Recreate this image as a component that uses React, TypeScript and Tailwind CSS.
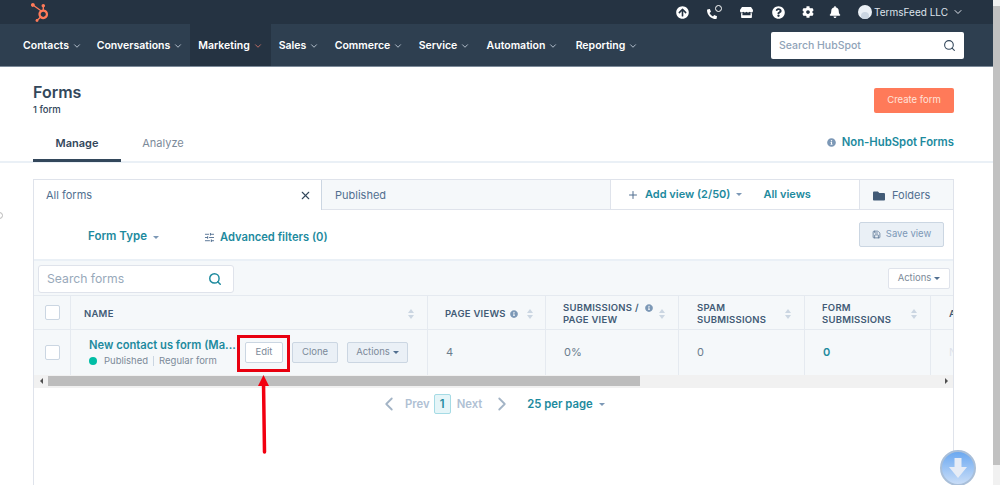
import { ChevronDown, ChevronLeft, ChevronRight, Plus, Save, Search, SlidersHorizontal, X } from "lucide-react";
import { FaArrowCircleUp, FaBell, FaCog, FaFolder, FaHubspot, FaInfoCircle, FaPhone, FaQuestionCircle, FaStore } from "react-icons/fa";

const NAV = [
  { label: "Contacts", cls: "w-[75px]" },
  { label: "Conversations", cls: "w-[100px]" },
  { label: "Marketing", cls: "w-[81px] bg-[#253342]", active: true },
  { label: "Sales", cls: "w-[56px]" },
  { label: "Commerce", cls: "w-[84px]" },
  { label: "Service", cls: "w-[67px]" },
  { label: "Automation", cls: "w-[89px]" },
  { label: "Reporting", cls: "w-[80px]" },
];

function Caret({ className = "" }: { className?: string }) {
  return <span className={`inline-block border-x-[3px] border-t-[3px] border-x-transparent ${className}`} />;
}

function Sort() {
  return (
    <span className="flex flex-col gap-[2px]">
      <span className="border-x-[3px] border-b-[4px] border-x-transparent border-b-[#cbd6e2]" />
      <span className="border-x-[3px] border-t-[4px] border-x-transparent border-t-[#cbd6e2]" />
    </span>
  );
}

function Info({ className = "" }: { className?: string }) {
  return <FaInfoCircle className={`text-[#7c98b6] ${className}`} />;
}

export default function App() {
  return (
    <div className="relative flex h-[485px] w-[1000px] overflow-hidden bg-white font-['Inter',sans-serif] text-[#33475b]">
      <div className="w-[993px] shrink-0">
        <div className="flex h-[24px] items-center bg-[#253342] pl-[30px] pr-[29px]">
          <FaHubspot className="text-[19px] text-[#ff7a59]" />
          <div className="ml-auto flex items-center text-white">
            <FaArrowCircleUp className="text-[13px]" />
            <span className="relative ml-[18px] h-[14px] w-[15px]">
              <FaPhone className="absolute bottom-0 left-0 -scale-x-100 text-[10px]" />
              <span className="absolute right-0 top-0 size-[7px] rounded-full border border-white" />
            </span>
            <FaStore className="ml-[18px] text-[13px]" />
            <FaQuestionCircle className="ml-[19px] text-[13px]" />
            <FaCog className="ml-[17px] text-[12px]" />
            <FaBell className="ml-[15px] text-[12px]" />
            <span className="ml-[17px] flex size-[14px] items-end justify-center overflow-hidden rounded-full bg-[#eaf0f6]">
              <span className="h-[7px] w-[8px] rounded-t-full bg-[#cbd6e2]" />
            </span>
            <span className="ml-[2px] text-[10px] text-[#dfe3eb]">TermsFeed LLC</span>
            <ChevronDown className="ml-[4px] size-[12px] text-[#dfe3eb]" />
          </div>
        </div>

        <div className="flex h-[43px] items-center border-b border-[#7c8a99] bg-[#2e3f50] pl-[15px] pr-[29px]">
          {NAV.map((n) => (
            <div key={n.label} className={`flex h-full shrink-0 items-center justify-center gap-[3px] pt-[2px] text-[10.5px] font-semibold text-white ${n.cls}`}>
              {n.label}
              <ChevronDown className={`size-[10px] ${n.active ? "text-[#d9776a]" : "text-[#cbd6e2]"}`} />
            </div>
          ))}
          <div className="ml-auto flex h-[27px] w-[193px] items-center justify-between rounded-[2px] bg-white pl-[8px] pr-[8px]">
            <span className="pt-[2px] text-[10.5px] font-medium text-[#8fa3b8]">Search HubSpot</span>
            <Search className="size-[13px] text-[#33475b]" />
          </div>
        </div>

        <div className="flex items-start justify-between pl-[33px] pr-[39px] pt-[15px]">
          <div>
            <h1 className="text-[16px] font-semibold leading-[20px]">Forms</h1>
            <p className="mt-[2px] text-[9.5px] font-medium leading-[12px]">1 form</p>
          </div>
          <button className="mt-[6px] h-[25px] w-[80px] rounded-[2px] bg-[#ff7a59] text-[9.5px] text-[#ffe3da]">Create form</button>
        </div>

        <div className="mt-[14px] flex h-[33px] items-end justify-between border-b-2 border-[#eaf0f6] pl-[33px] pr-[39px]">
          <div className="flex h-[33px] text-[11px]">
            <div className="-mb-[1px] flex w-[88px] items-center justify-center border-b-[3px] border-[#33475b] pb-[1px] font-semibold leading-none">Manage</div>
            <div className="flex w-[84px] items-center justify-center pb-[3px] text-[#7c8a99]">Analyze</div>
          </div>
          <div className="flex h-[33px] items-center gap-[6px] pb-[4px] text-[11.3px] font-semibold text-[#1d8a9e]">
            <Info className="text-[9px]" />
            Non-HubSpot Forms
          </div>
        </div>

        <div className="ml-[33px] mt-[16px] h-[310px] w-[921px] border-x border-t border-[#dfe3eb]">
          <div className="flex h-[30px] border-b border-[#dfe3eb]">
            <div className="-mb-px flex w-[288px] items-center justify-between border-r border-[#cbd6e2] bg-white pl-[12px] pr-[9px] text-[11px] text-[#516f90]">
              All forms
              <X className="size-[13px] text-[#33475b]" />
            </div>
            <div className="flex w-[289px] items-center border-r border-[#dfe3eb] bg-[#f5f8fa] pl-[13px] pt-[2px] text-[11px] text-[#516f90]">Published</div>
            <div className="flex flex-1 items-center pl-[16px] text-[11px] font-semibold text-[#1d8a9e]">
              <Plus className="size-[12px] text-[#516f90]" />
              <span className="ml-[6px]">Add view (2/50)</span>
              <Caret className="ml-[6px] border-t-[#7c98b6]" />
              <span className="ml-[21px]">All views</span>
            </div>
            <div className="flex w-[94px] items-center gap-[7px] border-l border-[#dfe3eb] bg-[#f5f8fa] pl-[13px] pt-[2px] text-[11px] text-[#516f90]">
              <FaFolder className="text-[12px] text-[#425b76]" />
              Folders
            </div>
          </div>

          <div className="flex h-[51px] items-center border-b-2 border-[#eaf0f6] pl-[54px] pr-[9px] font-semibold text-[#1d8a9e]">
            <div className="mt-[5px] flex items-center text-[11.5px]">
              Form Type
              <Caret className="ml-[6px] border-t-[#7c98b6]" />
              <SlidersHorizontal className="ml-[45px] size-[11px] text-[#516f90]" />
              <span className="ml-[5px] text-[11.2px]">Advanced filters (0)</span>
            </div>
            <button className="ml-auto flex h-[25px] w-[85px] items-center justify-center gap-[5px] rounded-[2px] border border-[#cbd6e2] bg-[#eaf0f6] text-[9.5px] font-normal text-[#7c98b6]">
              <Save className="size-[9px] text-[#516f90]" />
              Save view
            </button>
          </div>

          <div className="flex h-[34px] items-center justify-between bg-[#f5f8fa] pl-[4px] pr-[3px] pt-[1px]">
            <div className="flex h-[28px] w-[196px] items-center justify-between rounded-[3px] border border-[#dfe3eb] bg-white pl-[8px] pr-[11px] pt-[1px] text-[12.2px] text-[#98a9ba]">
              Search forms
              <Search className="size-[14px] stroke-[2.5] text-[#1d8a9e]" />
            </div>
            <button className="flex h-[21px] w-[62px] items-center justify-center gap-[3px] rounded-[2px] border border-[#dfe3eb] bg-white text-[9.5px] text-[#7c8a99]">
              Actions
              <Caret className="border-t-[#516f90]" />
            </button>
          </div>

          <div className="overflow-hidden bg-[#f5f8fa]">
            <div className="flex h-[35px] border-y border-[#e5eaf0] pt-0 text-[9.5px] font-semibold leading-[12px] tracking-[0.25px] text-[#425b76]">
              <div className="flex w-[37px] shrink-0 items-center justify-center border-r border-[#e5eaf0]">
                <span className="size-[15px] rounded-[2px] border border-[#cbd6e2] bg-white" />
              </div>
              <div className="flex w-[357px] shrink-0 items-center justify-between border-r border-[#e5eaf0] pl-[13px] pr-[13px] pt-[2px]">NAME<Sort /></div>
              <div className="flex w-[118px] shrink-0 items-center border-r border-[#e5eaf0] pl-[17px] pt-[2px]">
                PAGE VIEWS
                <Info className="ml-[4px] text-[8px]" />
                <span className="ml-[9px]"><Sort /></span>
              </div>
              <div className="flex w-[133px] shrink-0 items-center border-r border-[#e5eaf0] pl-[17px] pt-[2px]">
                <span>SUBMISSIONS /<br />PAGE VIEW</span>
                <Info className="-mt-[11px] ml-[6px] text-[8px]" />
                <span className="ml-[6px]"><Sort /></span>
              </div>
              <div className="flex w-[126px] shrink-0 items-center justify-between border-r border-[#e5eaf0] pl-[18px] pr-[13px] pt-[2px]"><span>SPAM<br />SUBMISSIONS</span><Sort /></div>
              <div className="flex w-[126px] shrink-0 items-center justify-between border-r border-[#e5eaf0] pl-[17px] pr-[13px] pt-[2px]"><span>FORM<br />SUBMISSIONS</span><Sort /></div>
              <div className="flex flex-1 items-center pl-[18px] pt-[2px]">A</div>
            </div>

            <div className="flex h-[45px] text-[11px] text-[#6b7c8d]">
              <div className="flex w-[37px] shrink-0 items-center justify-center border-r border-[#e5eaf0]">
                <span className="size-[15px] rounded-[2px] border border-[#cbd6e2] bg-white" />
              </div>
              <div className="flex w-[357px] shrink-0 items-center border-r border-[#e5eaf0] pl-[18px]">
                <div className="w-[149px] shrink-0">
                  <div className="whitespace-nowrap text-[11.2px] font-semibold leading-[14px] text-[#1d8a9e]">New contact us form (Ma...</div>
                  <div className="mt-[3px] flex items-center whitespace-nowrap text-[9.5px] leading-[12px] text-[#7c8a99]">
                    <span className="size-[8px] rounded-full bg-[#00bda5]" />
                    <span className="ml-[7px]">Published</span>
                    <span className="mx-[5px] h-[10px] w-px bg-[#cbd6e2]" />
                    Regular form
                  </div>
                </div>
                <div className="ml-[7px] flex gap-[9px] text-[9.5px] text-[#7c8a99]">
                  <button className="h-[21px] w-[38px] rounded-[2px] border border-[#cbd6e2] bg-white">Edit</button>
                  <button className="h-[21px] w-[46px] rounded-[2px] border border-[#cbd6e2] bg-[#eaf0f6]">Clone</button>
                  <button className="flex h-[21px] w-[61px] items-center justify-center gap-[3px] rounded-[2px] border border-[#cbd6e2] bg-[#eaf0f6]">
                    Actions
                    <Caret className="border-t-[#516f90]" />
                  </button>
                </div>
              </div>
              <div className="flex w-[118px] shrink-0 items-center border-r border-[#e5eaf0] pl-[18px]">4</div>
              <div className="flex w-[133px] shrink-0 items-center border-r border-[#e5eaf0] pl-[18px]">0%</div>
              <div className="flex w-[126px] shrink-0 items-center border-r border-[#e5eaf0] pl-[18px]">0</div>
              <div className="flex w-[126px] shrink-0 items-center border-r border-[#e5eaf0] pl-[18px] font-semibold text-[#1d8a9e]">0</div>
              <div className="flex flex-1 items-center pl-[18px] text-[#dfe3eb]">N</div>
            </div>

            <div className="flex h-[13px] items-center bg-[#f1f1f1] pb-[2px]">
              <span className="flex w-[14px] justify-center">
                <span className="border-y-[3px] border-r-[3px] border-y-transparent border-r-[#505050]" />
              </span>
              <span className="h-[10px] w-[592px] bg-[#bdbdbd]" />
              <span className="ml-auto flex w-[14px] justify-center">
                <span className="border-y-[3px] border-l-[3px] border-y-transparent border-l-[#505050]" />
              </span>
            </div>
          </div>

          <div className="flex h-[30px] items-center pl-[344px] pt-[2px] text-[11.3px] font-semibold">
            <ChevronLeft className="size-[22px] text-[#a3b4c6]" />
            <span className="ml-[5px] text-[#b0c1d4]">Prev</span>
            <span className="ml-[4px] flex h-[20px] w-[17px] items-center justify-center rounded-[2px] border border-[#a5dbe5] bg-[#e5f5f8] text-[#1d8a9e]">1</span>
            <span className="ml-[6px] text-[#b0c1d4]">Next</span>
            <ChevronRight className="ml-[9px] size-[22px] text-[#a3b4c6]" />
            <span className="ml-[14px] text-[#1d8a9e]">25 per page</span>
            <Caret className="ml-[6px] border-t-[#7c98b6]" />
          </div>
        </div>
      </div>

      <div className="flex flex-1 flex-col bg-[#f1f1f1]">
        <div className="h-[6px]" />
        <div className="h-[459px] bg-[#c1c1c1]" />
      </div>

      {/* annotation drawn over the screenshot */}
      <div className="absolute -left-[4px] top-[212px] size-[7px] rounded-full border border-[#b8b8b8]" />
      <div className="absolute left-[237px] top-[335px] h-[37px] w-[53px] border-[3px] border-[#e8000f]" />
      <svg className="absolute left-[252px] top-[372px]" width="24" height="84" viewBox="0 0 24 84">
        <path d="M11.5 10 L12.5 80" stroke="#f20010" strokeWidth="3.5" strokeLinecap="round" fill="none" />
        <path d="M11.5 3 L17 14 L6 14 Z" fill="#f20010" />
      </svg>

      <div className="absolute left-[940px] top-[450px] flex size-[36px] items-center justify-center rounded-full border-2 border-[#a9bfd9] bg-gradient-to-b from-[#6aa8f0] to-[#c9ddf7]">
        <svg width="26" height="26" viewBox="0 0 26 26">
          <path d="M9.5 3 H16.5 V12 H22 L13 23 L4 12 H9.5 Z" fill="#e6ecf6" />
        </svg>
      </div>
    </div>
  );
}
